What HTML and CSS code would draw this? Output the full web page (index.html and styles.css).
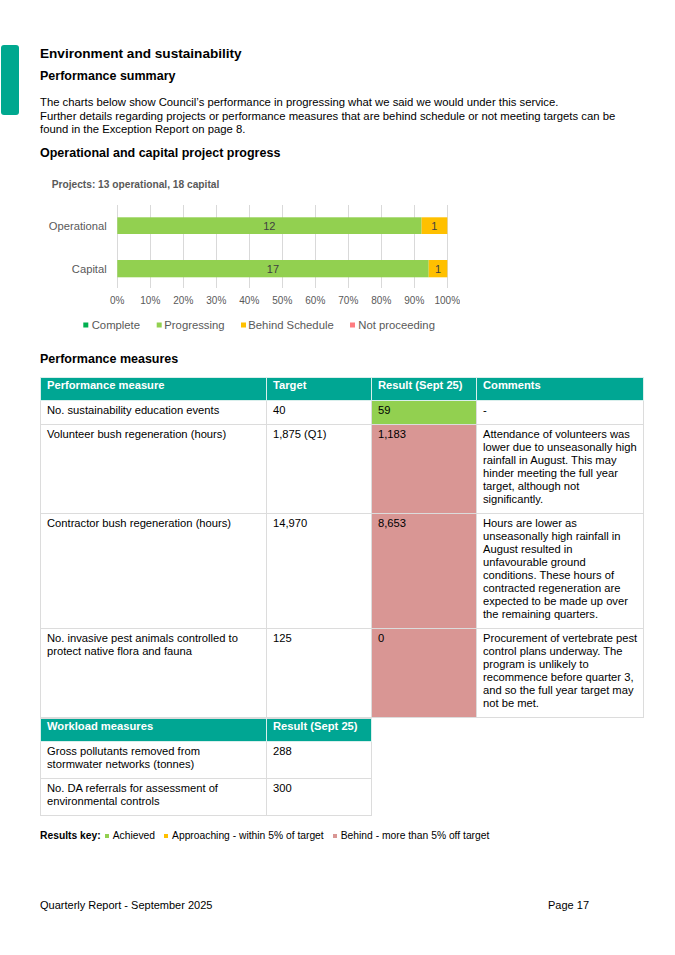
FILE: index.html
```html
<!DOCTYPE html>
<html>
<head>
<meta charset="utf-8">
<link rel="stylesheet" href="styles.css">
</head>
<body>
<div class="page">
  <div class="tab"></div>
  <div class="content">
    <h1 class="h1">Environment and sustainability</h1>
    <h2 class="h2">Performance summary</h2>
    <p class="intro">The charts below show Council’s performance in progressing what we said we would under this service.<br>Further details regarding projects or performance measures that are behind schedule or not meeting targets can be<br>found in the Exception Report on page 8.</p>
    <h3 class="h3">Operational and capital project progress</h3>

    <svg class="chart" width="420" height="170" viewBox="0 0 420 170">
      <text class="c-title" x="11.7" y="17.7">Projects: 13 operational, 18 capital</text>
      <g class="grid">
        <line x1="77.5" y1="35" x2="77.5" y2="118"/>
        <line x1="110.5" y1="35" x2="110.5" y2="118"/>
        <line x1="143.5" y1="35" x2="143.5" y2="118"/>
        <line x1="176.5" y1="35" x2="176.5" y2="118"/>
        <line x1="209.5" y1="35" x2="209.5" y2="118"/>
        <line x1="242.5" y1="35" x2="242.5" y2="118"/>
        <line x1="275.5" y1="35" x2="275.5" y2="118"/>
        <line x1="308.5" y1="35" x2="308.5" y2="118"/>
        <line x1="341.5" y1="35" x2="341.5" y2="118"/>
        <line x1="374.5" y1="35" x2="374.5" y2="118"/>
        <line x1="407.5" y1="35" x2="407.5" y2="118"/>
      </g>
      <rect x="77.3" y="47.3" width="304.3" height="16.7" fill="#92d050"/>
      <rect x="381.6" y="47.3" width="25.7" height="16.7" fill="#ffc000"/>
      <rect x="77.3" y="90" width="311.4" height="17.3" fill="#92d050"/>
      <rect x="388.7" y="90" width="18.6" height="17.3" fill="#ffc000"/>
      <text class="c-bar" x="229.3" y="59.6" text-anchor="middle">12</text>
      <text class="c-bar" x="394.4" y="59.6" text-anchor="middle">1</text>
      <text class="c-bar" x="232.9" y="102.6" text-anchor="middle">17</text>
      <text class="c-bar" x="398" y="102.6" text-anchor="middle">1</text>
      <text class="c-cat" x="66.7" y="59.8" text-anchor="end">Operational</text>
      <text class="c-cat" x="66.7" y="102.8" text-anchor="end">Capital</text>
      <g class="c-axis" text-anchor="middle">
        <text x="77.3" y="133.6">0%</text>
        <text x="110.3" y="133.6">10%</text>
        <text x="143.3" y="133.6">20%</text>
        <text x="176.3" y="133.6">30%</text>
        <text x="209.3" y="133.6">40%</text>
        <text x="242.3" y="133.6">50%</text>
        <text x="275.3" y="133.6">60%</text>
        <text x="308.3" y="133.6">70%</text>
        <text x="341.3" y="133.6">80%</text>
        <text x="374.3" y="133.6">90%</text>
        <text x="407.3" y="133.6">100%</text>
      </g>
      <rect x="43.3" y="152.5" width="5" height="5" fill="#00b050"/>
      <text class="c-leg" x="51.7" y="159">Complete</text>
      <rect x="116.7" y="152.5" width="5" height="5" fill="#92d050"/>
      <text class="c-leg" x="124.3" y="159">Progressing</text>
      <rect x="201" y="152.5" width="5" height="5" fill="#ffc000"/>
      <text class="c-leg" x="208.3" y="159">Behind Schedule</text>
      <rect x="310" y="152.5" width="5" height="5" fill="#ff7c80"/>
      <text class="c-leg" x="318.3" y="159">Not proceeding</text>
    </svg>

    <h3 class="h3 h3-measures">Performance measures</h3>

    <table class="tbl tbl-main">
      <colgroup>
        <col class="w1"><col class="w2"><col class="w3"><col class="w4">
      </colgroup>
      <tr class="head">
        <th>Performance measure</th><th>Target</th><th>Result (Sept 25)</th><th>Comments</th>
      </tr>
      <tr>
        <td>No. sustainability education events</td><td>40</td><td class="ok">59</td><td>-</td>
      </tr>
      <tr>
        <td>Volunteer bush regeneration (hours)</td><td>1,875 (Q1)</td><td class="bad">1,183</td>
        <td class="nw">Attendance of volunteers was<br>lower due to unseasonally high<br>rainfall in August. This may<br>hinder meeting the full year<br>target, although not<br>significantly.</td>
      </tr>
      <tr>
        <td>Contractor bush regeneration (hours)</td><td>14,970</td><td class="bad">8,653</td>
        <td class="nw">Hours are lower as<br>unseasonally high rainfall in<br>August resulted in<br>unfavourable ground<br>conditions. These hours of<br>contracted regeneration are<br>expected to be made up over<br>the remaining quarters.</td>
      </tr>
      <tr>
        <td class="nw">No. invasive pest animals controlled to<br>protect native flora and fauna</td><td>125</td><td class="bad">0</td>
        <td class="nw">Procurement of vertebrate pest<br>control plans underway. The<br>program is unlikely to<br>recommence before quarter 3,<br>and so the full year target may<br>not be met.</td>
      </tr>
    </table>
    <table class="tbl tbl-work">
      <colgroup>
        <col class="w1"><col class="w2">
      </colgroup>
      <tr class="head">
        <th>Workload measures</th><th>Result (Sept 25)</th>
      </tr>
      <tr>
        <td class="nw">Gross pollutants removed from<br>stormwater networks (tonnes)</td><td>288</td>
      </tr>
      <tr>
        <td class="nw">No. DA referrals for assessment of<br>environmental controls</td><td>300</td>
      </tr>
    </table>

    <div class="key">
      <span class="key-label">Results key:</span>
      <span class="key-item"><span class="sq sq-green"></span>Achieved</span>
      <span class="key-item"><span class="sq sq-orange"></span>Approaching - within 5% of target</span>
      <span class="key-item"><span class="sq sq-red"></span>Behind - more than 5% off target</span>
    </div>

    <div class="footer">
      <span>Quarterly Report - September 2025</span>
      <span>Page 17</span>
    </div>
  </div>
</div>
</body>
</html>
```
FILE: styles.css
```css
html, body {
  margin: 0;
  padding: 0;
  background: #ffffff;
}
body {
  font-family: "Liberation Sans", Arial, sans-serif;
  color: #000000;
  width: 675px;
  height: 955px;
  overflow: hidden;
}
.page {
  display: flex;
  align-items: flex-start;
  padding-top: 45px;
}
.tab {
  width: 18px;
  height: 70px;
  margin-left: 1px;
  background: #00a88f;
  border-radius: 3px;
  flex: none;
}
.content {
  margin-left: 21px;
  width: 603px;
  flex: none;
}
.h1 {
  margin: 0;
  font-size: 13.6px;
  line-height: 18px;
  font-weight: bold;
}
.h2 {
  margin: 5px 0 0;
  font-size: 12.5px;
  line-height: 16px;
  font-weight: bold;
}
.intro {
  margin: 12px 0 0;
  font-size: 11.3px;
  line-height: 13.6px;
  white-space: nowrap;
}
.h3 {
  margin: 8px 0 0;
  font-size: 12.5px;
  line-height: 16px;
  font-weight: bold;
}
.chart {
  display: block;
  margin-top: 9px;
  font-family: "Liberation Sans", Arial, sans-serif;
}
.chart .grid line {
  stroke: #d9d9d9;
  stroke-width: 1;
}
.c-title {
  font-size: 10.2px;
  font-weight: bold;
  fill: #595959;
}
.c-bar {
  font-size: 11px;
  fill: #404040;
}
.c-cat {
  font-size: 11.2px;
  fill: #595959;
}
.c-axis {
  font-size: 10px;
  fill: #595959;
}
.c-leg {
  font-size: 11.3px;
  fill: #595959;
}
.h3-measures {
  margin-top: 11px;
}
.tbl {
  border-collapse: collapse;
  table-layout: fixed;
  font-size: 11.2px;
  line-height: 13px;
}
.tbl-main {
  margin-top: 10px;
  width: 603px;
}
.tbl-work {
  width: 331px;
}
.w1 { width: 226px; }
.w2 { width: 105px; }
.w3 { width: 105px; }
.w4 { width: 167px; }
.tbl th, .tbl td {
  border: 1px solid #dcdcdc;
  padding: 3px 6px 7px;
  text-align: left;
  vertical-align: top;
}
.tbl .head th {
  background: #00a693;
  color: #ffffff;
  font-weight: bold;
  padding: 1px 6px 8px;
  border-color: #d9efec;
}
.tbl-work .head th {
  border-top-color: #dcdcdc;
}
.nw {
  white-space: nowrap;
}
.ok {
  background: #92d050;
}
.bad {
  background: #d99694;
}
.key {
  display: flex;
  align-items: center;
  margin-top: 14px;
  font-size: 10.3px;
  line-height: 12px;
}
.key-label {
  font-weight: bold;
  margin-right: 4px;
}
.key-item {
  display: inline-flex;
  align-items: center;
  margin-right: 9px;
}
.sq {
  width: 4px;
  height: 4px;
  margin-right: 4px;
  display: inline-block;
}
.sq-green { background: #92d050; }
.sq-orange { background: #ffc000; }
.sq-red { background: #d99694; }
.footer {
  display: flex;
  justify-content: space-between;
  width: 549px;
  margin-top: 57px;
  font-size: 11px;
  line-height: 13px;
}
```
